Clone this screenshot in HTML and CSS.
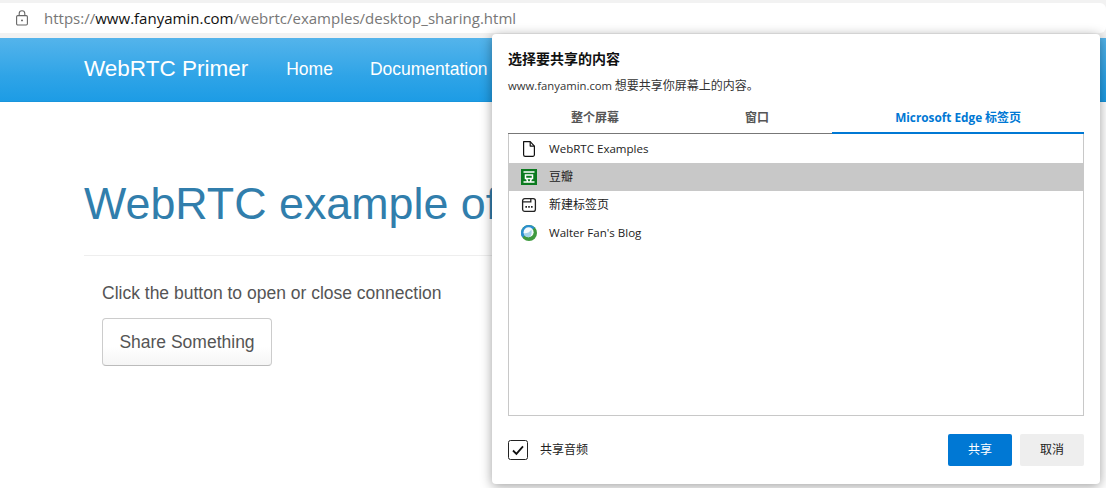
FILE: index.html
```html
<!DOCTYPE html>
<html lang="en">
<head>
<meta charset="utf-8">
<title>WebRTC Primer</title>
<link rel="stylesheet" href="styles.css">
</head>
<body>
<header class="chrome">
  <div class="address">
    <svg class="lock" width="14" height="16" viewBox="0 0 14 16" fill="none" stroke="#666" stroke-width="1.1"><path d="M4.2 5.6V3.6a2.8 2.8 0 0 1 5.6 0v2"/><rect x="1.6" y="5.6" width="10.8" height="9.4" rx="1.2"/><circle cx="7" cy="10.4" r=".9" fill="#555" stroke="none"/></svg>
    <span class="url"><span class="dim">https://</span>www.fanyamin.com<span class="dim">/webrtc/examples/desktop_sharing.html</span></span>
  </div>
</header>
<nav class="navbar">
  <span class="brand">WebRTC Primer</span>
  <a class="navlink">Home</a>
  <a class="navlink">Documentation</a>
</nav>
<main class="content">
  <h1 class="title">WebRTC example of</h1>
  <div class="body">
    <p class="lead">Click the button to open or close connection</p>
    <button class="btn">Share Something</button>
  </div>
</main>
<section class="dialog">
  <h2 class="d-title">选择要共享的内容</h2>
  <p class="d-sub"><span class="latin">www.fanyamin.com</span> 想要共享你屏幕上的内容。</p>
  <div class="tabs">
    <div class="tab">整个屏幕</div>
    <div class="tab">窗口</div>
    <div class="tab active"><span class="latin">Microsoft Edge</span> 标签页</div>
  </div>
  <ul class="list">
    <li class="row">
      <svg class="ico" width="16" height="16" viewBox="0 0 16 16" fill="#fff" stroke="#111" stroke-width="1.2" stroke-linejoin="round"><path d="M2.6.7h6.6l4.2 4.4v8.6a1.6 1.6 0 0 1-1.6 1.6H4.2a1.6 1.6 0 0 1-1.6-1.6z"/><path d="M9.2.7v4.4h4.2" fill="none"/></svg>
      <span class="latin name">WebRTC Examples</span>
    </li>
    <li class="row selected">
      <svg class="ico" width="16" height="16" viewBox="0 0 16 16"><rect width="16" height="16" fill="#0b7a1f"/><path d="M2.5 3h11M4.5 6h7v3.4h-7zM5.6 9.5l1 3M10.4 9.5l-1 3M2.5 13h11" fill="none" stroke="#fff" stroke-width="1.5"/></svg>
      <span class="name">豆瓣</span>
    </li>
    <li class="row">
      <svg class="ico" width="16" height="16" viewBox="0 0 16 16" fill="none" stroke="#222" stroke-width="1.3"><rect x="1.6" y="1.6" width="12.8" height="12.8" rx="2.2"/><path d="M1.6 4.8h8.2V1.6"/><path d="M4.4 9.8h1.6M7.2 9.8h1.6M10 9.8h1.6" stroke-width="1.7"/></svg>
      <span class="name">新建标签页</span>
    </li>
    <li class="row">
      <svg class="ico" width="16" height="16" viewBox="0 0 16 16"><circle cx="8" cy="8" r="8" fill="#3f9a3f"/><path d="M8 0a8 8 0 0 0-6.6 12.5L13.8 2.5A8 8 0 0 0 8 0z" fill="#2a8fd0"/><circle cx="7.6" cy="7.2" r="5" fill="#f4fafd"/><path d="M2.7 8.2c2.6.6 5.6-.4 7.6-3.4 1 2.8 0 7.4-3 7.4-2.4 0-4.2-1.6-4.6-4z" fill="#a5d2ea"/></svg>
      <span class="latin name">Walter Fan's Blog</span>
    </li>
  </ul>
  <footer class="d-foot">
    <label class="audio">
      <svg class="check" width="20" height="20" viewBox="0 0 20 20" fill="none"><rect x=".5" y=".5" width="19" height="19" rx="2" fill="#fff" stroke="#222"/><path d="M5 10.5l3.4 3.4L15 6.4" stroke="#111" stroke-width="1.8"/></svg>
      <span class="audio-label">共享音频</span>
    </label>
    <div class="actions">
      <button class="d-btn primary">共享</button>
      <button class="d-btn">取消</button>
    </div>
  </footer>
</section>
</body>
</html>
```
FILE: styles.css
```css
* { box-sizing: border-box; }
html, body { margin: 0; padding: 0; }
body {
  width: 1106px;
  height: 488px;
  overflow: hidden;
  background: #fff;
  position: relative;
  font-family: "Liberation Sans", Arial, sans-serif;
}
.chrome {
  height: 38px;
  padding: 3px 0 5px;
  background: #f2f2f2;
}
.address {
  height: 30px;
  display: flex;
  align-items: center;
  background: #fff;
  border-radius: 0 6px 6px 0;
  padding-left: 15px;
  gap: 15px;
}
.lock { flex: none; }
.url {
  font: 15.03px "Open Sans", "Noto Sans", sans-serif;
  color: #111;
  white-space: nowrap;
}
.dim { color: #777; }
.navbar {
  height: 64px;
  display: flex;
  align-items: center;
  padding-left: 84px;
  background: linear-gradient(#54b4eb, #2fa4e7 60%, #1d9ce5);
  border-bottom: 1px solid #1995dc;
  color: #fff;
}
.brand { font-size: 22.5px; margin-right: 38px; padding-bottom: 2px; }
.navlink { font-size: 17.5px; margin-right: 37px; }
.content { padding: 0 0 0 84px; }
.title {
  margin: 0;
  padding: 74px 0 24px;
  width: 1000px;
  font-size: 44.8px;
  line-height: 55px;
  font-weight: 400;
  color: #317eac;
  white-space: nowrap;
  border-bottom: 1px solid #eee;
}
.body { padding: 25px 0 0 18px; }
.lead { margin: 0; font-size: 17.5px; line-height: 24px; color: #555; }
.btn {
  display: block;
  margin-top: 13px;
  width: 170px;
  height: 48px;
  padding: 0;
  font: 17.5px "Liberation Sans", Arial, sans-serif;
  color: #555;
  background: linear-gradient(#fff, #fff 60%, #f5f5f5);
  border: 1px solid #ccc;
  border-bottom-color: #bbb;
  border-radius: 4px;
}
.dialog {
  position: absolute;
  left: 492px;
  top: 34px;
  width: 608px;
  height: 450px;
  padding: 16px 16px 0;
  display: flex;
  flex-direction: column;
  background: #fff;
  border-radius: 4px;
  box-shadow: 0 2px 12px rgba(0, 0, 0, .38);
  font-family: "Open Sans", "Noto Sans CJK SC", sans-serif;
  color: #1a1a1a;
}
.d-title {
  margin: 0;
  height: 18px;
  font: 700 14px/16px "Noto Sans CJK SC", sans-serif;
  color: #111;
}
.d-sub {
  margin: 9px 0 0;
  height: 18px;
  font: 12px/16px "Noto Sans CJK SC", sans-serif;
  color: #333;
}
.latin { font-family: "Open Sans", sans-serif; font-size: 11.3px; }
.tabs {
  display: flex;
  margin-top: 9px;
  height: 30px;
  font: 700 12px/22px "Noto Sans CJK SC", sans-serif;
  color: #555;
  text-align: center;
}
.tabs .latin { font-size: 11.8px; }
.tab {
  flex: 1 1 auto;
  height: 30px;
  padding-top: 2px;
  border-bottom: 1px solid #777;
}
.tab.active { color: #0078d4; border-bottom: 2px solid #0078d4; }
.list {
  list-style: none;
  margin: 0;
  padding: 1px 0 0;
  height: 282px;
  border: 1px solid #c8c8c8;
  border-top: 0;
}
.row {
  height: 28px;
  display: flex;
  align-items: center;
  padding-left: 12px;
  gap: 12px;
  font: 12px/16px "Noto Sans CJK SC", sans-serif;
  color: #222;
}
.name { padding-bottom: 2px; }
.row .latin { font-size: 11.55px; padding-bottom: 0; }
.ico { flex: none; }
.selected { background: #c8c8c8; }
.d-foot {
  flex: 1;
  display: flex;
  align-items: flex-start;
  justify-content: space-between;
  padding-top: 18px;
}
.audio {
  display: flex;
  align-items: center;
  gap: 12px;
  height: 32px;
  font: 12px "Noto Sans CJK SC", sans-serif;
  color: #222;
}
.audio-label { padding-bottom: 3px; }
.actions { display: flex; gap: 8px; }
.d-btn {
  width: 64px;
  height: 32px;
  padding: 0 0 3px;
  border: 0;
  border-radius: 2px;
  background: #eee;
  color: #222;
  font: 12px "Noto Sans CJK SC", sans-serif;
}
.primary { background: #0078d4; color: #fff; }
```
